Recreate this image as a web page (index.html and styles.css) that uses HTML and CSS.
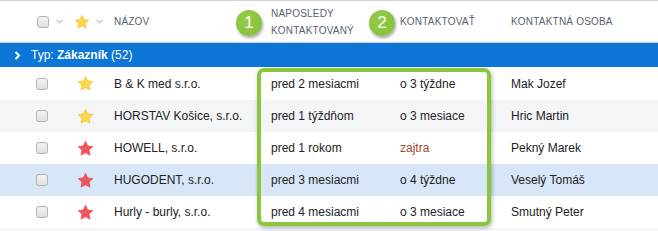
FILE: index.html
```html
<!DOCTYPE html>
<html lang="sk">
<head>
<meta charset="utf-8">
<title>Kontakty</title>
<link rel="stylesheet" href="styles.css">
</head>
<body>
<div class="table">
  <div class="row head">
    <div class="lead">
      <span class="cb"></span>
      <svg class="chev" width="7" height="5" viewBox="0 0 7 5"><polyline points="0.5,0.8 3.5,3.8 6.5,0.8" fill="none" stroke="#b5b9bf" stroke-width="1.1"/></svg>
      <svg class="star hstar" width="16" height="16" viewBox="0 0 24 24"><path d="M12 1.8l3.1 6.6 7.2.9-5.3 5 1.4 7.1L12 17.9l-6.4 3.5 1.4-7.1-5.3-5 7.2-.9z" fill="#ffd54a" stroke="#f2c12e" stroke-width="1" stroke-linejoin="round"/></svg>
      <svg class="chev" width="7" height="5" viewBox="0 0 7 5"><polyline points="0.5,0.8 3.5,3.8 6.5,0.8" fill="none" stroke="#b5b9bf" stroke-width="1.1"/></svg>
    </div>
    <div class="hcell">NÁZOV</div>
    <div class="hcell two"><span class="badge b1">1</span>NAPOSLEDY<br>KONTAKTOVANÝ</div>
    <div class="hcell"><span class="badge b2">2</span>KONTAKTOVAŤ</div>
    <div class="hcell">KONTAKTNÁ OSOBA</div>
  </div>
  <div class="group">
    <svg class="gchev" width="7" height="9" viewBox="0 0 7 9"><polyline points="1.5,1 5,4.5 1.5,8" fill="none" stroke="#fff" stroke-width="2"/></svg>
    <span>Typ: <b>Zákazník</b> (52)</span>
  </div>
  <div class="body">
    <div class="row data first">
      <div class="lead"><span class="cb"></span><svg class="star" width="17" height="17" viewBox="0 0 24 24"><path d="M12 1.8l3.1 6.6 7.2.9-5.3 5 1.4 7.1L12 17.9l-6.4 3.5 1.4-7.1-5.3-5 7.2-.9z" fill="#ffd54a" stroke="#f2c12e" stroke-width="1" stroke-linejoin="round"/></svg></div>
      <div>B &amp; K med s.r.o.</div><div>pred 2 mesiacmi</div><div>o 3 týždne</div><div>Mak Jozef</div>
    </div>
    <div class="row data alt">
      <div class="lead"><span class="cb"></span><svg class="star" width="17" height="17" viewBox="0 0 24 24"><path d="M12 1.8l3.1 6.6 7.2.9-5.3 5 1.4 7.1L12 17.9l-6.4 3.5 1.4-7.1-5.3-5 7.2-.9z" fill="#ffd54a" stroke="#f2c12e" stroke-width="1" stroke-linejoin="round"/></svg></div>
      <div>HORSTAV Košice, s.r.o.</div><div>pred 1 týždňom</div><div>o 3 mesiace</div><div>Hric Martin</div>
    </div>
    <div class="row data">
      <div class="lead"><span class="cb"></span><svg class="star" width="17" height="17" viewBox="0 0 24 24"><path d="M12 1.8l3.1 6.6 7.2.9-5.3 5 1.4 7.1L12 17.9l-6.4 3.5 1.4-7.1-5.3-5 7.2-.9z" fill="#f2545b" stroke="#e8454d" stroke-width="1" stroke-linejoin="round"/></svg></div>
      <div>HOWELL, s.r.o.</div><div>pred 1 rokom</div><div class="soon">zajtra</div><div>Pekný Marek</div>
    </div>
    <div class="row data sel">
      <div class="lead"><span class="cb"></span><svg class="star" width="17" height="17" viewBox="0 0 24 24"><path d="M12 1.8l3.1 6.6 7.2.9-5.3 5 1.4 7.1L12 17.9l-6.4 3.5 1.4-7.1-5.3-5 7.2-.9z" fill="#f2545b" stroke="#e8454d" stroke-width="1" stroke-linejoin="round"/></svg></div>
      <div>HUGODENT, s.r.o.</div><div>pred 3 mesiacmi</div><div>o 4 týždne</div><div>Veselý Tomáš</div>
    </div>
    <div class="row data">
      <div class="lead"><span class="cb"></span><svg class="star" width="17" height="17" viewBox="0 0 24 24"><path d="M12 1.8l3.1 6.6 7.2.9-5.3 5 1.4 7.1L12 17.9l-6.4 3.5 1.4-7.1-5.3-5 7.2-.9z" fill="#f2545b" stroke="#e8454d" stroke-width="1" stroke-linejoin="round"/></svg></div>
      <div>Hurly - burly, s.r.o.</div><div>pred 4 mesiacmi</div><div>o 3 mesiace</div><div>Smutný Peter</div>
    </div>
    <div class="highlight"></div>
  </div>
  <div class="foot"></div>
</div>
</body>
</html>
```

FILE: styles.css
```css
html, body {
  margin: 0;
  padding: 0;
  background: #fff;
}
body {
  font-family: "Liberation Sans", Arial, sans-serif;
  color: #222;
  width: 658px;
  height: 231px;
  overflow: hidden;
}
.table {
  border-top: 1px solid #d3d3d3;
}
.row {
  display: grid;
  grid-template-columns: 114px 157px 129px 111px 1fr;
  align-items: center;
}
.head {
  height: 41px;
  border-bottom: 1px solid #cfcfcf;
  font-size: 10px;
  letter-spacing: 0.2px;
  color: #58616d;
}
.lead {
  display: flex;
  align-items: center;
  padding-left: 36px;
  height: 100%;
}
.head .lead {
  padding-left: 37px;
}
.cb {
  display: inline-block;
  width: 10px;
  height: 10px;
  border: 1px solid #b3b3b3;
  border-radius: 3px;
  background: linear-gradient(#f2f2f2, #e0e0e0);
}
.chev {
  margin-left: 7px;
}
.hstar {
  margin-left: 11px;
}
.head .star + .chev {
  margin-left: 6px;
}
.data .star {
  margin-left: 29px;
}
.hcell {
  position: relative;
  line-height: 17px;
}
.badge {
  position: absolute;
  width: 26px;
  height: 26px;
  border-radius: 50%;
  background: radial-gradient(circle at 40% 35%, #94cc48, #84bd38);
  box-shadow: 1px 2px 3px rgba(0, 0, 0, 0.35);
  color: #fff;
  font-size: 17px;
  line-height: 26px;
  text-align: center;
  letter-spacing: 0;
  top: 50%;
  margin-top: -12px;
}
.b1 { left: -35px; }
.b2 { left: -31px; }
.group {
  height: 24px;
  background: #0b76d6;
  color: #fff;
  display: flex;
  align-items: center;
  font-size: 12px;
}
.gchev {
  margin-left: 14px;
  margin-right: 10px;
}
.body {
  position: relative;
}
.data {
  height: 32px;
  font-size: 12px;
}
.data.first {
  height: 33px;
}
.alt { background: #f4f5f7; }
.sel { background: #d8e7f7; }
.soon { color: #a8482c; }
.foot {
  height: 4px;
  background: #f4f5f7;
}
.highlight {
  position: absolute;
  left: 257px;
  top: 1px;
  width: 226px;
  height: 150px;
  border: 4px solid #8cc63f;
  border-radius: 7px;
  box-shadow: 1px 2px 4px rgba(0, 0, 0, 0.3);
  pointer-events: none;
}
```
